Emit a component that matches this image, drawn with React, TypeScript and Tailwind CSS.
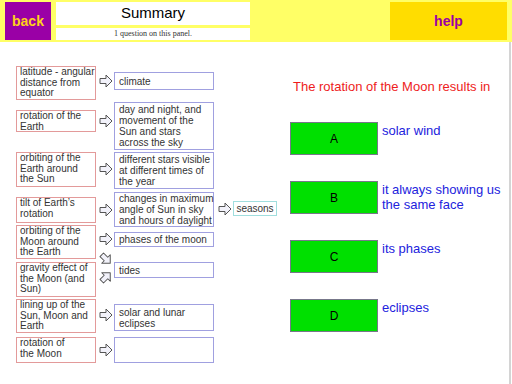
import React from 'react';

const Arrow = ({ rotate = 0, className = "" }: { rotate?: number; className?: string }) => (
  <svg width="14" height="14" viewBox="0 0 14 14" className={className} style={{ transform: `rotate(${rotate}deg)` }}>
    <polygon
      points="1,4.5 7,4.5 7,1 13,7 7,13 7,9.5 1,9.5"
      fill="#f2f2fa"
      stroke="#555"
      strokeWidth="1"
      strokeLinejoin="round"
    />
  </svg>
);

const Cause = ({ lines, mt, h }: { lines: string[]; mt: number; h: number }) => (
  <div
    className="w-[80px] shrink-0 border border-[#e39a9a] bg-white pl-[3px] text-[10px] leading-[10.5px] text-[#333] whitespace-nowrap"
    style={{ marginTop: mt, height: h }}
  >
    {lines.map((l, i) => (
      <div key={i}>{l}</div>
    ))}
  </div>
);

const Effect = ({ lines, mt, h }: { lines: string[]; mt: number; h: number }) => (
  <div
    className="ml-[1px] w-[100px] shrink-0 border border-[#a0a0e0] bg-white pl-[4px] flex flex-col justify-center text-[10px] leading-[11px] text-[#333] whitespace-nowrap"
    style={{ marginTop: mt, height: h }}
  >
    {lines.map((l, i) => (
      <div key={i}>{l}</div>
    ))}
  </div>
);

const Answer = ({ letter, text }: { letter: string; text: string[] }) => (
  <div className="flex items-start h-[33px]">
    <div className="w-[88px] h-[33px] shrink-0 bg-[#00e000] border border-[#77778a] flex items-center justify-center text-[12px] text-black">
      {letter}
    </div>
    <div className="ml-[4px] mt-[1px] text-[13px] leading-[15px] text-[#2222dd]">
      {text.map((t, i) => (
        <div key={i}>{t}</div>
      ))}
    </div>
  </div>
);

export default function App() {
  return (
    <div className="w-[512px] h-[384px] bg-white overflow-hidden" style={{ fontFamily: '"Liberation Sans", Arial, sans-serif' }}>
      {/* header */}
      <div className="h-[42px] bg-[#ffff66] flex items-start pt-[2px]">
        <div className="ml-[5px] w-[46px] h-[38px] bg-[#9a00a6] flex items-center justify-center text-[14px] font-bold text-[#ffd21a]">
          back
        </div>
        <div className="ml-[5px] w-[194px] flex flex-col gap-[3px]">
          <div className="h-[23px] bg-white flex items-center justify-center text-[15px] text-black">Summary</div>
          <div
            className="h-[12px] bg-white flex items-center justify-center text-[8px] text-[#333]"
            style={{ fontFamily: '"Liberation Serif", "Times New Roman", serif' }}
          >
            1 question on this panel.
          </div>
        </div>
        <div className="ml-auto mr-[5px] w-[117px] h-[38px] bg-[#ffdd00] flex items-center justify-center text-[14px] font-bold text-[#9a00a6]">
          help
        </div>
      </div>

      {/* body */}
      <div className="w-[511px] h-[342px] border-r-2 border-[#d4d4d4] flex">
        <div className="w-[290px] shrink-0 pl-[16px] pt-[24px] flex flex-col">
          {/* row 1 */}
          <div className="flex items-start">
            <Cause lines={["latitude - angular", "distance from", "equator"]} mt={0} h={34} />
            <Arrow className="ml-[3px] mt-[8px] shrink-0" />
            <Effect lines={["climate"]} mt={6} h={18} />
          </div>
          {/* row 2 */}
          <div className="flex items-start mt-[2px]">
            <Cause lines={["rotation of the", "Earth"]} mt={8} h={22} />
            <Arrow className="ml-[3px] mt-[12px] shrink-0" />
            <Effect lines={["day and night, and", "movement of the", "Sun and stars", "across the sky"]} mt={0} h={48} />
          </div>
          {/* row 3 */}
          <div className="flex items-start mt-[2px]">
            <Cause lines={["orbiting of the", "Earth around", "the Sun"]} mt={0} h={35} />
            <Arrow className="ml-[3px] mt-[10px] shrink-0" />
            <Effect lines={["different stars visible", "at different times of", "the year"]} mt={0} h={37} />
          </div>
          {/* row 4 */}
          <div className="flex items-start mt-[3px]">
            <Cause lines={["tilt of Earth’s", "rotation"]} mt={5} h={26} />
            <Arrow className="ml-[3px] mt-[11px] shrink-0" />
            <Effect lines={["changes in maximum", "angle of Sun in sky", "and hours of daylight"]} mt={0} h={35} />
            <Arrow className="ml-[4px] mt-[10px] shrink-0" />
            <div className="ml-[1px] mt-[9px] w-[44px] h-[15px] border border-[#a0dede] bg-white flex items-center justify-center text-[10px] text-[#333]">
              seasons
            </div>
          </div>
          {/* row 5 */}
          <div className="flex items-start mt-[-2px] h-[34px]">
            <Cause lines={["orbiting of the", "Moon around", "the Earth"]} mt={0} h={34} />
            <div className="ml-[3px] flex flex-col shrink-0">
              <Arrow className="mt-[7px]" />
              <Arrow rotate={45} className="mt-[6px]" />
            </div>
            <Effect lines={["phases of the moon"]} mt={7} h={15} />
          </div>
          {/* row 6 */}
          <div className="flex items-start mt-[3px]">
            <Cause lines={["gravity effect of", "the Moon (and", "Sun)"]} mt={0} h={35} />
            <Arrow rotate={-45} className="ml-[3px] mt-[8px] shrink-0" />
            <Effect lines={["tides"]} mt={0} h={16} />
          </div>
          {/* row 7 */}
          <div className="flex items-start mt-[2px]">
            <Cause lines={["lining up of the", "Sun, Moon and", "Earth"]} mt={0} h={34} />
            <Arrow className="ml-[3px] mt-[9px] shrink-0" />
            <Effect lines={["solar and lunar", "eclipses"]} mt={5} h={27} />
          </div>
          {/* row 8 */}
          <div className="flex items-start mt-[4px]">
            <Cause lines={["rotation of", "the Moon"]} mt={0} h={26} />
            <Arrow className="ml-[3px] mt-[6px] shrink-0" />
            <Effect lines={[]} mt={0} h={26} />
          </div>
        </div>

        <div className="flex-1 flex flex-col pt-[37px]">
          <div className="ml-[3px] text-[13px] leading-[15px] text-[#ee1c1c] whitespace-nowrap">
            The rotation of the Moon results in
          </div>
          <div className="mt-[28px] flex flex-col gap-[26px]">
            <Answer letter="A" text={["solar wind"]} />
            <Answer letter="B" text={["it always showing us", "the same face"]} />
            <Answer letter="C" text={["its phases"]} />
            <Answer letter="D" text={["eclipses"]} />
          </div>
        </div>
      </div>
    </div>
  );
}
